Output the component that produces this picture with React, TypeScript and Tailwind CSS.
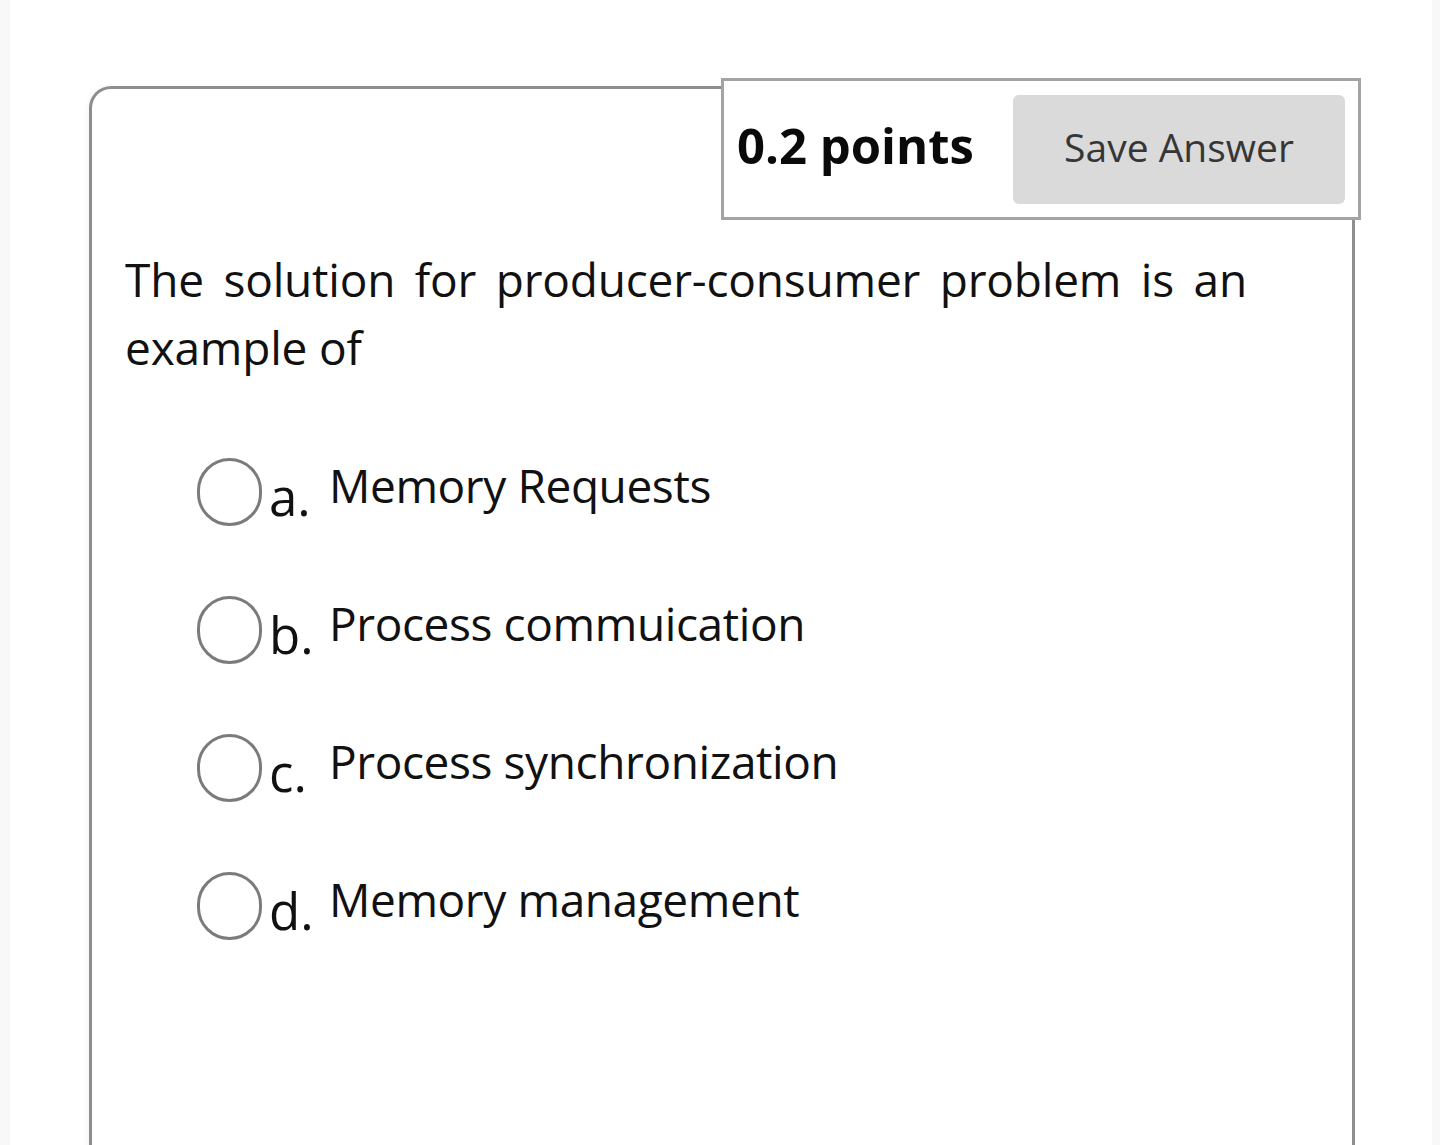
import { useState } from 'react';

// ── Data ──────────────────────────────────────────────────────────────────────
const OPTIONS = [
  { key: 'a', label: 'Memory Requests' },
  { key: 'b', label: 'Process commuication' },
  { key: 'c', label: 'Process synchronization' },
  { key: 'd', label: 'Memory management' },
];

const font = { fontFamily: '"Open Sans", "Noto Sans", sans-serif' };

// ── Option row ────────────────────────────────────────────────────────────────
function Option({
  letter,
  text,
  checked,
  onPick,
}: {
  letter: string;
  text: string;
  checked: boolean;
  onPick: () => void;
}) {
  return (
    <label className="flex items-start h-[138px] cursor-pointer" onClick={onPick}>
      <span className="w-[65px] h-[68px] shrink-0 rounded-full border-[3px] border-[#7b7b7b] flex items-center justify-center">
        {checked && <span className="w-[34px] h-[36px] rounded-full bg-[#555]" />}
      </span>
      <span className="w-[60px] ml-[7px] mt-[13px] text-[51px] leading-none text-[#111]">{letter}.</span>
      <span className="mt-[4px] text-[46px] leading-none tracking-[-0.4px] text-[#111]">{text}</span>
    </label>
  );
}

// ── Page ──────────────────────────────────────────────────────────────────────
export default function App() {
  const [picked, setPicked] = useState<string | null>(null);

  return (
    <div className="flex h-[1145px] overflow-hidden bg-white" style={font}>
      <div className="w-[10px] shrink-0 bg-[#f8f8f8]" />

      <div className="flex-1 pl-[79px] pr-[77px] pt-[86px]">
        <div className="relative h-[1200px] rounded-tl-[22px] border-[3px] border-b-0 border-[#8e8e8e] bg-white shadow-[-2px_0_4px_rgba(0,0,0,0.04)]">
          {/* points + save */}
          <div className="absolute right-[-9px] top-[-11px] w-[640px] h-[142px] border-[3px] border-[#a4a4a4] bg-white flex items-center justify-between pl-[13px] pr-[13px]">
            <span className="mb-[8px] text-[49px] font-bold leading-none text-[#0a0a0a]">0.2 points</span>
            <button className="w-[332px] h-[109px] pb-[5px] rounded-[6px] bg-[#dadada] text-[39px] leading-none text-[#363636]">
              Save Answer
            </button>
          </div>

          <p className="ml-[33px] mt-[156px] w-[1122px] text-justify text-[46px] leading-[68px] tracking-[-0.2px] text-[#111]">
            The solution for producer-consumer problem is an example of
          </p>

          <div className="ml-[105px] mt-[77px]">
            {OPTIONS.map(o => (
              <Option
                key={o.key}
                letter={o.key}
                text={o.label}
                checked={picked === o.key}
                onPick={() => setPicked(o.key)}
              />
            ))}
          </div>
        </div>
      </div>

      <div className="w-[8px] shrink-0 bg-[#f8f8f8]" />
    </div>
  );
}
